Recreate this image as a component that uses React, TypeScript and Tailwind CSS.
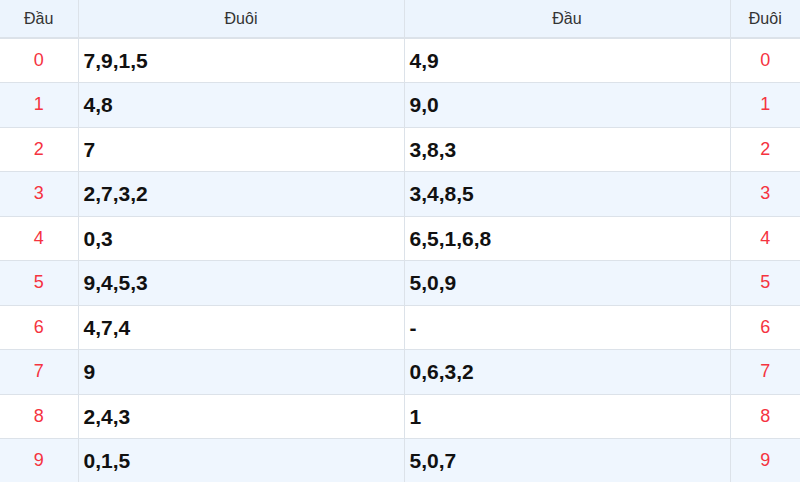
const rows: [string, string, string][] = [
  ['0', '7,9,1,5', '4,9'],
  ['1', '4,8', '9,0'],
  ['2', '7', '3,8,3'],
  ['3', '2,7,3,2', '3,4,8,5'],
  ['4', '0,3', '6,5,1,6,8'],
  ['5', '9,4,5,3', '5,0,9'],
  ['6', '4,7,4', '-'],
  ['7', '9', '0,6,3,2'],
  ['8', '2,4,3', '1'],
  ['9', '0,1,5', '5,0,7'],
]

export default function App() {
  return (
    <div className="w-[800px] h-[482px] overflow-hidden bg-white font-['Liberation_Sans',Arial,sans-serif]">
      <table className="w-full border-collapse table-fixed">
        <colgroup>
          <col className="w-[78px]" />
          <col className="w-[326px]" />
          <col className="w-[326px]" />
          <col className="w-[70px]" />
        </colgroup>
        <thead>
          <tr className="h-[38px] bg-[#ecf4fd] text-[16px] text-[#333]">
            <th className="font-normal border-r border-b-2 border-[#dce2e9]">Đầu</th>
            <th className="font-normal border-x border-b-2 border-[#dce2e9]">Đuôi</th>
            <th className="font-normal border-x border-b-2 border-[#dce2e9]">Đầu</th>
            <th className="font-normal border-l border-b-2 border-[#dce2e9]">Đuôi</th>
          </tr>
        </thead>
        <tbody>
          {rows.map(([n, tail, head], i) => (
            <tr key={n} className={`h-[44.5px] ${i % 2 === 1 ? 'bg-[#eff6fe]' : 'bg-white'}`}>
              <td className="text-center text-[18px] text-[#f5333f] border-r border-b border-[#dce2e9]">{n}</td>
              <td className="pl-[5px] text-[21px] font-bold text-[#111] border-x border-b border-[#dce2e9]">{tail}</td>
              <td className="pl-[5px] text-[21px] font-bold text-[#111] border-x border-b border-[#dce2e9]">{head}</td>
              <td className="text-center text-[18px] text-[#f5333f] border-l border-b border-[#dce2e9]">{n}</td>
            </tr>
          ))}
        </tbody>
      </table>
    </div>
  )
}
